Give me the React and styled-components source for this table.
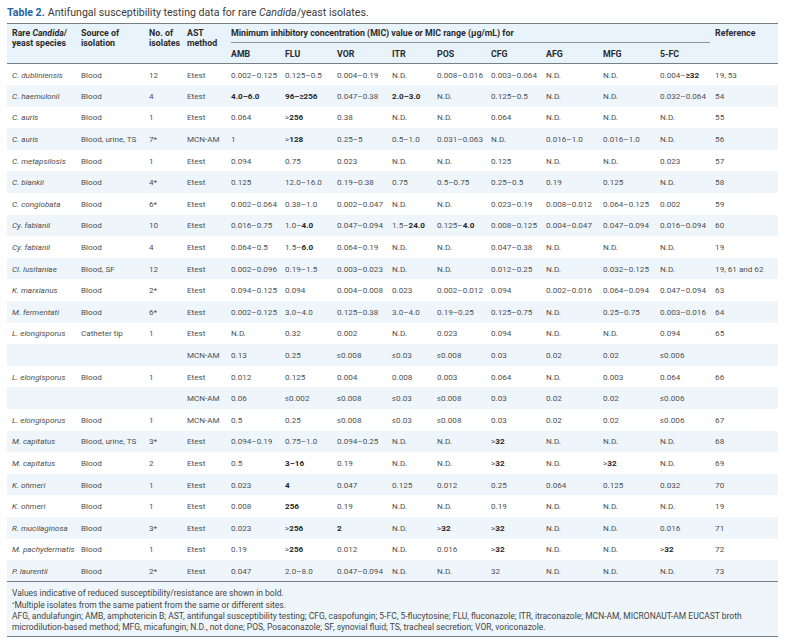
import React from "react";
import styled, { createGlobalStyle } from "styled-components";

const GlobalStyle = createGlobalStyle`
  body {
    margin: 0;
    background: #ffffff;
    font-family: Roboto, "Liberation Sans", sans-serif;
  }
`;

const Page = styled.div`
  width: 771px;
  padding: 6px 8px 8px 7px;
`;

const Caption = styled.div`
  font-size: 10.6px;
  line-height: 13px;
  color: #3b3b3b;
  margin-bottom: 4px;
`;

const CaptionLabel = styled.span`
  font-weight: 700;
  color: #2463a6;
  margin-right: 3px;
`;

const Table = styled.table`
  width: 771px;
  border-collapse: collapse;
  table-layout: fixed;
  border-top: 1px solid #778087;
  font-size: 8.1px;
`;

const Head = styled.thead`
  background: #e9f3fb;
  border-bottom: 1px solid #778087;
`;

const HeadCell = styled.th`
  text-align: left;
  vertical-align: top;
  font-weight: 700;
  font-size: 8.8px;
  color: #2b2b2b;
  line-height: 10px;
  padding: ${(p) => (p.$sub ? "6px 5px 4px" : "4px 5px 0")};
  white-space: nowrap;
`;

const GroupTitle = styled.div`
  border-bottom: 1px solid #8d949a;
  padding-bottom: 4px;
  margin-right: -5px;
`;

const Row = styled.tr`
  height: 21.6px;
  background: ${(p) => (p.$alt ? "#eef6fc" : "#ffffff")};
`;

const Cell = styled.td`
  padding: 0 5px;
  line-height: 10px;
  color: #4f4f4f;
  white-space: nowrap;
  vertical-align: middle;
  font-style: ${(p) => (p.$italic ? "italic" : "normal")};
`;

const Body = styled.tbody`
  border-bottom: 1px solid #778087;
`;

const Strong = styled.strong`
  font-weight: 700;
  color: #262626;
`;

const Notes = styled.div`
  background: #eef6fc;
  border-bottom: 1px solid #778087;
  padding: 6px 5px 3px;
  font-size: 8.5px;
  line-height: 11.3px;
  color: #454545;
`;

const Sup = styled.sup`
  font-size: 5.5px;
  vertical-align: top;
  line-height: 8px;
`;

const widths = [69, 68, 38, 44, 54, 52, 55, 45, 54, 55, 57, 57, 55, 68];
const drugs = ["AMB", "FLU", "VOR", "ITR", "POS", "CFG", "AFG", "MFG", "5-FC"];

const rows = [
  ["C. dubliniensis", "Blood", "12", "Etest", "0.002–0.125", "0.125–0.5", "0.004–0.19", "N.D.", "0.008–0.016", "0.003–0.064", "N.D.", "N.D.", "0.004–**≥32**", "19, 53"],
  ["C. haemulonii", "Blood", "4", "Etest", "**4.0–6.0**", "**96–≥256**", "0.047–0.38", "**2.0–3.0**", "N.D.", "0.125–0.5", "N.D.", "N.D.", "0.032–0.064", "54"],
  ["C. auris", "Blood", "1", "Etest", "0.064", ">**256**", "0.38", "N.D.", "N.D.", "0.064", "N.D.", "N.D.", "N.D.", "55"],
  ["C. auris", "Blood, urine, TS", "7*", "MCN-AM", "1", ">**128**", "0.25–5", "0.5–1.0", "0.031–0.063", "N.D.", "0.016–1.0", "0.016–1.0", "N.D.", "56"],
  ["C. metapsilosis", "Blood", "1", "Etest", "0.094", "0.75", "0.023", "N.D.", "N.D.", "0.125", "N.D.", "N.D.", "0.023", "57"],
  ["C. blankii", "Blood", "4*", "Etest", "0.125", "12.0–16.0", "0.19–0.38", "0.75", "0.5–0.75", "0.25–0.5", "0.19", "0.125", "N.D.", "58"],
  ["C. conglobata", "Blood", "6*", "Etest", "0.002–0.064", "0.38–1.0", "0.002–0.047", "N.D.", "N.D.", "0.023–0.19", "0.008–0.012", "0.064–0.125", "0.002", "59"],
  ["Cy. fabianii", "Blood", "10", "Etest", "0.016–0.75", "1.0–**4.0**", "0.047–0.094", "1.5–**24.0**", "0.125–**4.0**", "0.008–0.125", "0.004–0.047", "0.047–0.094", "0.016–0.094", "60"],
  ["Cy. fabianii", "Blood", "4", "Etest", "0.064–0.5", "1.5–**6.0**", "0.064–0.19", "N.D.", "N.D.", "0.047–0.38", "N.D.", "N.D.", "N.D.", "19"],
  ["Cl. lusitaniae", "Blood, SF", "12", "Etest", "0.002–0.096", "0.19–1.5", "0.003–0.023", "N.D.", "N.D.", "0.012–0.25", "N.D.", "0.032–0.125", "N.D.", "19, 61 and 62"],
  ["K. marxianus", "Blood", "2*", "Etest", "0.094–0.125", "0.094", "0.004–0.008", "0.023", "0.002–0.012", "0.094", "0.002–0.016", "0.064–0.094", "0.047–0.094", "63"],
  ["M. fermentati", "Blood", "6*", "Etest", "0.002–0.125", "3.0–4.0", "0.125–0.38", "3.0–4.0", "0.19–0.25", "0.125–0.75", "N.D.", "0.25–0.75", "0.003–0.016", "64"],
  ["L. elongisporus", "Catheter tip", "1", "Etest", "N.D.", "0.32", "0.002", "N.D.", "0.023", "0.094", "N.D.", "N.D.", "0.094", "65"],
  ["", "", "", "MCN-AM", "0.13", "0.25", "≤0.008", "≤0.03", "≤0.008", "0.03", "0.02", "0.02", "≤0.006", ""],
  ["L. elongisporus", "Blood", "1", "Etest", "0.012", "0.125", "0.004", "0.008", "0.003", "0.064", "N.D.", "0.003", "0.064", "66"],
  ["", "", "", "MCN-AM", "0.06", "≤0.002", "≤0.008", "≤0.03", "≤0.008", "0.03", "0.02", "0.02", "≤0.006", ""],
  ["L. elongisporus", "Blood", "1", "MCN-AM", "0.5", "0.25", "≤0.008", "≤0.03", "≤0.008", "0.03", "0.02", "0.02", "≤0.006", "67"],
  ["M. capitatus", "Blood, urine, TS", "3*", "Etest", "0.094–0.19", "0.75–1.0", "0.094–0.25", "N.D.", "N.D.", ">**32**", "N.D.", "N.D.", "N.D.", "68"],
  ["M. capitatus", "Blood", "2", "Etest", "0.5", "**3–16**", "0.19", "N.D.", "N.D.", ">**32**", "N.D.", ">**32**", "N.D.", "69"],
  ["K. ohmeri", "Blood", "1", "Etest", "0.023", "**4**", "0.047", "0.125", "0.012", "0.25", "0.064", "0.125", "0.032", "70"],
  ["K. ohmeri", "Blood", "1", "Etest", "0.008", "**256**", "0.19", "N.D.", "N.D.", "0.19", "N.D.", "N.D.", "N.D.", "19"],
  ["R. mucilaginosa", "Blood", "3*", "Etest", "0.023", ">**256**", "**2**", "N.D.", ">**32**", ">**32**", "N.D.", "N.D.", "0.016", "71"],
  ["M. pachydermatis", "Blood", "1", "Etest", "0.19", ">**256**", "0.012", "N.D.", "0.016", ">**32**", "N.D.", "N.D.", ">**32**", "72"],
  ["P. laurentii", "Blood", "2*", "Etest", "0.047", "2.0–8.0", "0.047–0.094", "N.D.", "N.D.", "32", "N.D.", "N.D.", "N.D.", "73"],
];

// "**x**" marks the parts printed in bold
const renderValue = (text) =>
  text.split("**").map((part, i) =>
    i % 2 ? <Strong key={i}>{part}</Strong> : <React.Fragment key={i}>{part}</React.Fragment>
  );

const App = () => (
  <Page>
    <GlobalStyle />
    <Caption>
      <CaptionLabel>Table 2.</CaptionLabel>
      Antifungal susceptibility testing data for rare <i>Candida</i>/yeast isolates.
    </Caption>
    <Table>
      <colgroup>
        {widths.map((w, i) => (
          <col key={i} style={{ width: w }} />
        ))}
      </colgroup>
      <Head>
        <tr>
          <HeadCell rowSpan={2}>
            Rare <i>Candida</i>/
            <br />
            yeast species
          </HeadCell>
          <HeadCell rowSpan={2}>
            Source of
            <br />
            isolation
          </HeadCell>
          <HeadCell rowSpan={2}>
            No. of
            <br />
            isolates
          </HeadCell>
          <HeadCell rowSpan={2}>
            AST
            <br />
            method
          </HeadCell>
          <HeadCell colSpan={9}>
            <GroupTitle>Minimum inhibitory concentration (MIC) value or MIC range (µg/mL) for</GroupTitle>
          </HeadCell>
          <HeadCell rowSpan={2}>Reference</HeadCell>
        </tr>
        <tr>
          {drugs.map((d) => (
            <HeadCell key={d} $sub>
              {d}
            </HeadCell>
          ))}
        </tr>
      </Head>
      <Body>
        {rows.map((r, i) => (
          <Row key={i} $alt={i % 2 === 1}>
            {r.map((v, j) => (
              <Cell key={j} $italic={j === 0}>
                {renderValue(v)}
              </Cell>
            ))}
          </Row>
        ))}
      </Body>
    </Table>
    <Notes>
      Values indicative of reduced susceptibility/resistance are shown in bold.
      <br />
      <Sup>*</Sup>Multiple isolates from the same patient from the same or different sites.
      <br />
      AFG, andulafungin; AMB, amphotericin B; AST, antifungal susceptibility testing; CFG, caspofungin; 5-FC,
      5-flucytosine; FLU, fluconazole; ITR, itraconazole; MCN-AM, MICRONAUT-AM EUCAST broth microdilution-based
      method; MFG, micafungin; N.D., not done; POS, Posaconazole; SF, synovial fluid; TS, tracheal secretion; VOR,
      voriconazole.
    </Notes>
  </Page>
);

export default App;
